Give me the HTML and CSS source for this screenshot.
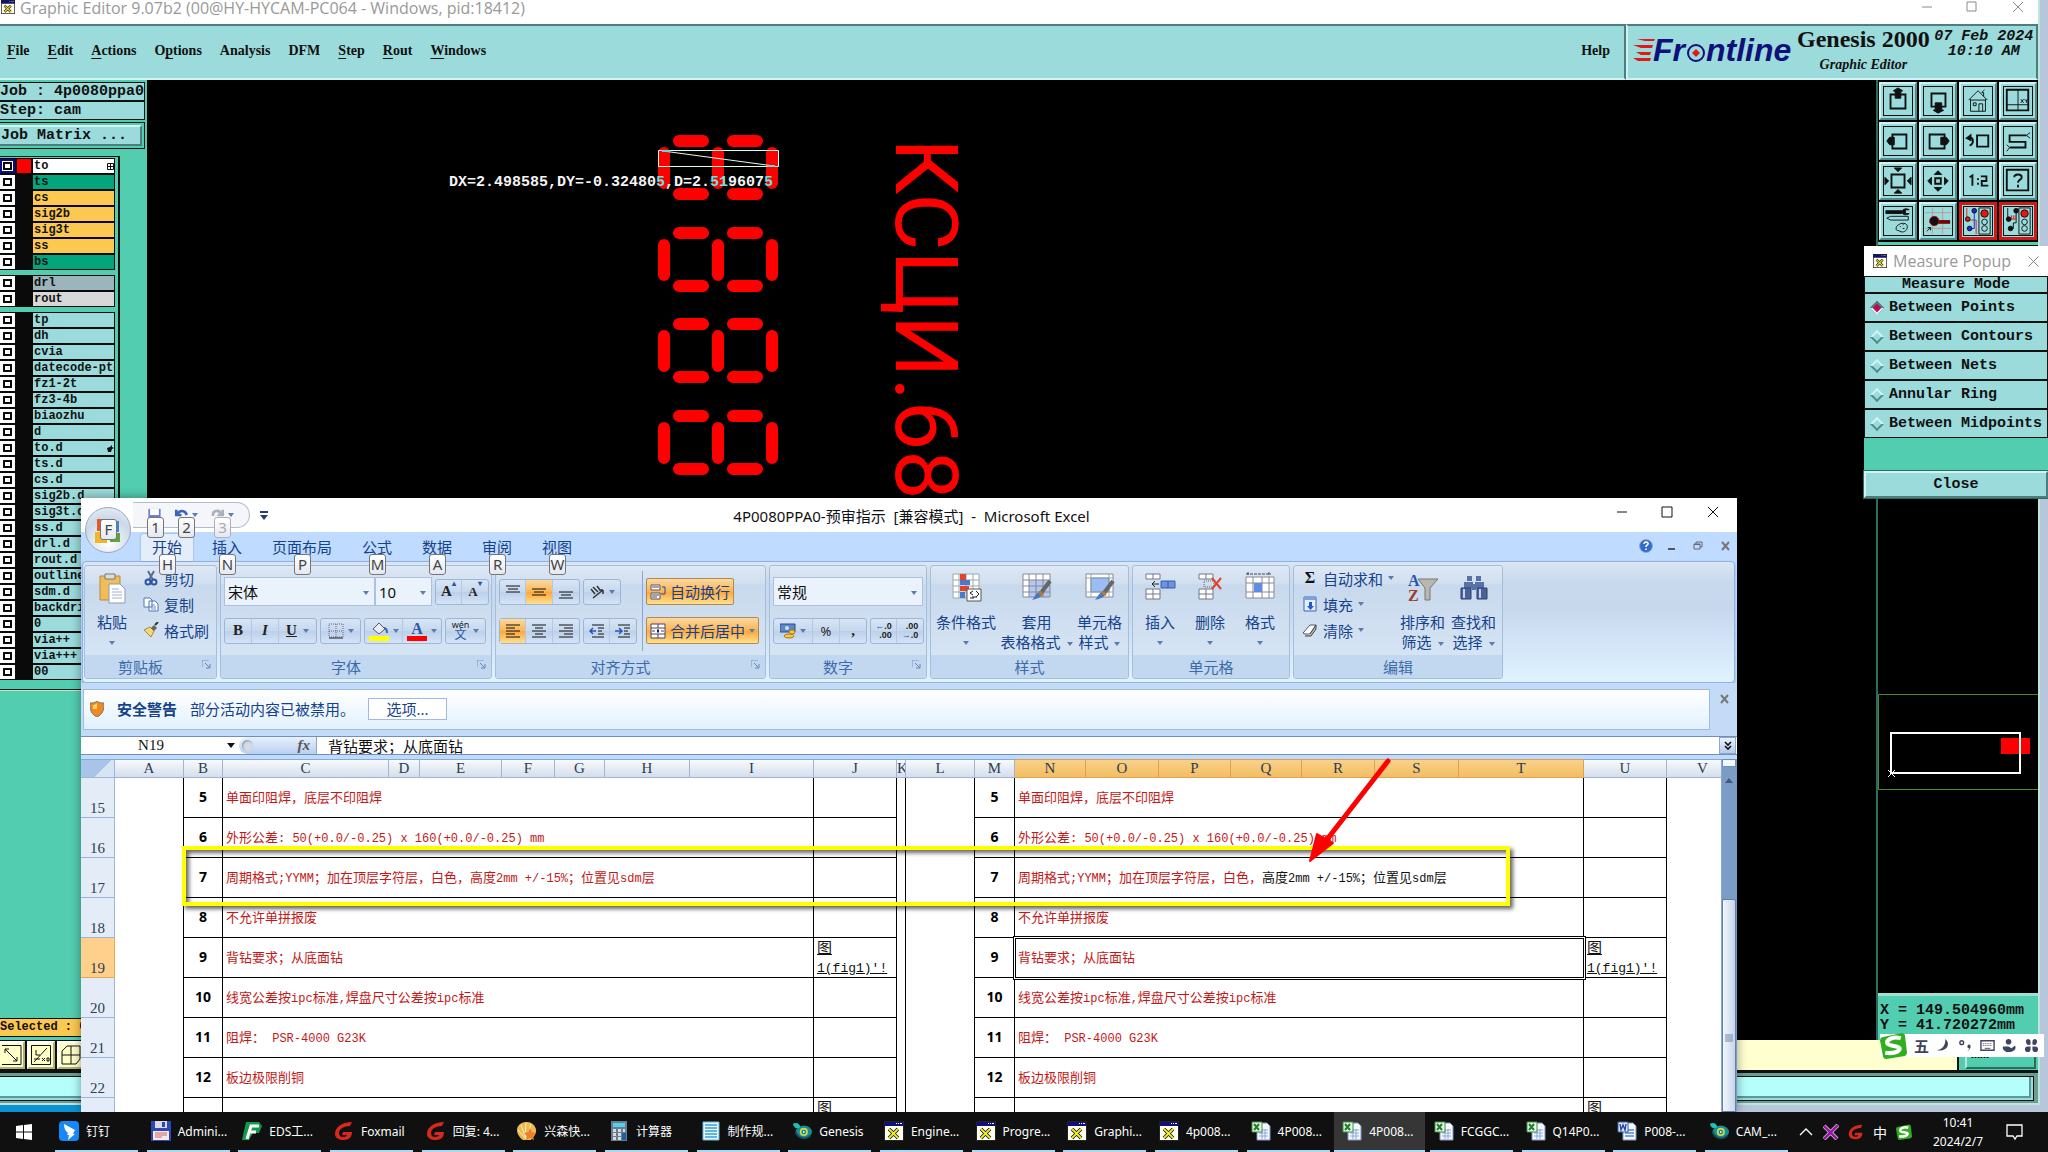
FILE: index.html
```html
<!DOCTYPE html>
<html lang="zh-CN">
<head>
    <meta charset="UTF-8">
    <meta name="viewport" content="width=device-width, initial-scale=1.0">
    <title>Graphic Editor</title>
    <link rel="stylesheet" href="styles.css">
</head>
<body>
    <!-- Shared icons -->
    <svg class="sprite" aria-hidden="true">
        <symbol id="i-x11" viewBox="0 0 20 20">
            <path d="M0 0h20v20H0z" fill="#222"/><path d="M1 5h18v14H1z" fill="#fffff0"/><path d="M1 1h18v4H1z" fill="#10107c"/>
            <path d="M12 2h1v1h-1zM14 2h1v1h-1zM16 2h2v1h-2z" fill="#fff"/>
            <path d="M5 8l9 9M14 8l-9 9" stroke="#111" stroke-width="3.4"/><path d="M5 8l9 9M14 8l-9 9" stroke="#f2ee20" stroke-width="1.8"/>
        </symbol>
        <symbol id="i-xls" viewBox="0 0 20 20">
            <path d="M6 2h10l3 3v14H6z" fill="#f4f8ff" stroke="#7d95c0"/><path d="M8 9h9M8 12h9M8 15h9M11 8v10M14 8v10" stroke="#8aa6d8"/>
            <path d="M1 1h10v10H1z" fill="#e9f5e4" stroke="#3c8c3c"/><path d="M3 3l5 6M8 3l-5 6" stroke="#1d8030" stroke-width="2"/>
        </symbol>
        <symbol id="i-doc" viewBox="0 0 20 20">
            <path d="M6 2h10l3 3v14H6z" fill="#f4f8ff" stroke="#7d95c0"/><path d="M8 9h9M8 12h9M8 15h9" stroke="#5b80cc" stroke-width="1.5"/>
            <path d="M1 1h10v10H1z" fill="#dfe9fb" stroke="#3a5cac"/><path d="M3 3l1 6 2-5 2 5 1-6" fill="none" stroke="#2348a0" stroke-width="1.4"/>
        </symbol>
        <symbol id="i-fox" viewBox="0 0 20 20">
            <path d="M18 1C8 1 1 6 1 13c0 4 4 6 9 6s8-3 8-8H9l-1 3h5c-1 2-3 2-4 2-3 0-4-2-4-4 0-4 5-7 11-7z" fill="#d8281c"/>
        </symbol>
        <symbol id="i-gen" viewBox="0 0 22 20">
            <ellipse cx="13" cy="11" rx="9" ry="7" fill="#168c8c"/><path d="M1 2c4-2 8 0 8 4-3 2-7 1-8-4z" fill="#20c0b8"/><path d="M4 11c3 8 12 9 16 4" fill="none" stroke="#184c60" stroke-width="2"/>
            <circle cx="13" cy="11" r="4.500" fill="#bcd85a"/><circle cx="13" cy="11" r="2.500" fill="#2a7a80"/><circle cx="13" cy="11" r="1" fill="#fff"/>
        </symbol>
        <symbol id="i-sogou" viewBox="0 0 26 26">
            <path d="M2 5L21 1q2 0 3 2l2 17q0 2-2 3L6 26q-2 0-3-2L0 8q0-2 2-3z" fill="#2fae1e"/>
            <path d="M20 6C13 4 6 7 7 11c1 3 12 2 12 5s-6 5-14 4" fill="none" stroke="#fff" stroke-width="4"/>
        </symbol>
        <symbol id="i-launch" viewBox="0 0 9 9"><path d="M0 7V0h7" fill="none" stroke="#6f94c4"/><path d="M3 3l4 4M8 4v4H4" fill="none" stroke="#5f84b8"/></symbol>
    </svg>

    <div class="desktop">
        <!-- Graphic editor window -->
        <section class="editor">
            <header class="editor-title">
                <svg class="win-icon"><use href="#i-x11"/></svg>
                <span>Graphic Editor 9.07b2 (00@HY-HYCAM-PC064 - Windows, pid:18412)</span>
                <svg class="win-controls" viewBox="0 0 102 12"><path d="M0 6h10M45 1h9v9h-9zM91 1l10 10M101 1L91 11" fill="none" stroke="#8a8a8a"/></svg>
            </header>
            <div class="menubar">
                <nav class="menus">
                    <a href="#"><u>F</u>ile</a>
                    <a href="#"><u>E</u>dit</a>
                    <a href="#"><u>A</u>ctions</a>
                    <a href="#">O<u>p</u>tions</a>
                    <a href="#">Analysis</a>
                    <a href="#">DFM</a>
                    <a href="#"><u>S</u>tep</a>
                    <a href="#"><u>R</u>out</a>
                    <a href="#"><u>W</u>indows</a>
                    <a href="#" class="help">Help</a>
                </nav>
                <div class="brand">
                    <svg class="frontline" viewBox="0 0 162 30">
                        <path d="M4 3h18l-1 2H12zM0 9h20l-1 3H8zM3 16h15l-1 3H8zM0 22h18l-1 3H5z" fill="#e01818"/>
                        <text x="20" y="25">Fr</text><text x="73" y="25">ntline</text>
                        <circle cx="63" cy="17" r="8" fill="none" stroke="#10107c" stroke-width="2"/>
                        <path d="M63 13l4 4-4 4-4-4z" fill="#e01818"/>
                    </svg>
                    <div class="product"><strong>Genesis 2000</strong><em>Graphic Editor</em></div>
                    <div class="stamp">07 Feb 2024<br>10:10 AM</div>
                </div>
            </div>

            <div class="editor-main">
                <aside class="layers-panel">
                    <div class="job-line">Job : 4p0080ppa0</div>
                    <div class="job-line">Step: cam</div>
                    <div class="matrix-wrap"><button class="matrix">Job Matrix ...</button></div>
                    <div class="layer-box">
                        <div class="layer-group">
                            <label class="layer current"><input type="checkbox"><i></i><span>to<svg class="mark" viewBox="0 0 7 7"><path d="M.5.500h6v6h-6zM3.500 0v7M0 3.500h7" fill="none" stroke="#111"/></svg></span></label>
                            <label class="layer mask"><input type="checkbox"><i></i><span>ts</span></label>
                            <label class="layer copper"><input type="checkbox"><i></i><span>cs</span></label>
                            <label class="layer copper"><input type="checkbox"><i></i><span>sig2b</span></label>
                            <label class="layer copper"><input type="checkbox"><i></i><span>sig3t</span></label>
                            <label class="layer copper"><input type="checkbox"><i></i><span>ss</span></label>
                            <label class="layer mask"><input type="checkbox"><i></i><span>bs</span></label>
                        </div>
                        <div class="layer-group">
                            <label class="layer drill"><input type="checkbox"><i></i><span>drl</span></label>
                            <label class="layer rout"><input type="checkbox"><i></i><span>rout</span></label>
                        </div>
                        <div class="layer-group">
                            <label class="layer"><input type="checkbox"><i></i><span>tp</span></label>
                            <label class="layer"><input type="checkbox"><i></i><span>dh</span></label>
                            <label class="layer"><input type="checkbox"><i></i><span>cvia</span></label>
                            <label class="layer"><input type="checkbox"><i></i><span>datecode-ptc</span></label>
                            <label class="layer"><input type="checkbox"><i></i><span>fz1-2t</span></label>
                            <label class="layer"><input type="checkbox"><i></i><span>fz3-4b</span></label>
                            <label class="layer"><input type="checkbox"><i></i><span>biaozhu</span></label>
                            <label class="layer"><input type="checkbox"><i></i><span>d</span></label>
                            <label class="layer"><input type="checkbox"><i></i><span>to.d<svg class="mark" viewBox="0 0 7 7"><path d="M0 3l3-1 2-2v2l2 1-2 1-1 3H1z" fill="#111"/></svg></span></label>
                            <label class="layer"><input type="checkbox"><i></i><span>ts.d</span></label>
                            <label class="layer"><input type="checkbox"><i></i><span>cs.d</span></label>
                            <label class="layer"><input type="checkbox"><i></i><span>sig2b.d</span></label>
                            <label class="layer"><input type="checkbox"><i></i><span>sig3t.d</span></label>
                            <label class="layer"><input type="checkbox"><i></i><span>ss.d</span></label>
                            <label class="layer"><input type="checkbox"><i></i><span>drl.d</span></label>
                            <label class="layer"><input type="checkbox"><i></i><span>rout.d</span></label>
                            <label class="layer"><input type="checkbox"><i></i><span>outline</span></label>
                            <label class="layer"><input type="checkbox"><i></i><span>sdm.d</span></label>
                            <label class="layer"><input type="checkbox"><i></i><span>backdri</span></label>
                            <label class="layer"><input type="checkbox"><i></i><span>0</span></label>
                            <label class="layer"><input type="checkbox"><i></i><span>via++</span></label>
                            <label class="layer"><input type="checkbox"><i></i><span>via+++</span></label>
                            <label class="layer"><input type="checkbox"><i></i><span>00</span></label>
                        </div>
                    </div>
                    <div class="panel-fill"></div>
                    <div class="selected">Selected : 0</div>
                </aside>

                <div class="canvas">
                    <svg class="artwork" viewBox="147 80 900 600" width="900" height="600">
                        <defs>
                            <g id="digit" stroke="#f00" stroke-width="12" stroke-linecap="round">
                                <path d="M679 141h24M733 141h24M679 194h24M733 194h24M664 153v30M718 153v30M772 153v30"/>
                            </g>
                        </defs>
                        <use href="#digit"/>
                        <use href="#digit" y="92"/>
                        <use href="#digit" y="183"/>
                        <use href="#digit" y="275"/>
                        <path d="M658.500 150.500h120v16h-120zM663 151l111 15" fill="none" stroke="#dfe"/>
                        <path d="M662 151h8M768 166h7" stroke="#4ce0e0" stroke-width="2"/>
                        <text class="readout" x="449" y="186">DX=2.498585,DY=-0.32480<tspan class="crossed">5</tspan>,D=2.<tspan class="crossed">51</tspan>9607<tspan class="crossed">5</tspan></text>
                        <text class="silk" transform="translate(896 138) rotate(90)">КСЦИ.68</text>
                    </svg>
                </div>

                <aside class="tools-panel">
                    <div class="tool-grid">
                        <button aria-label="Pan up"><svg viewBox="0 0 30 30"><path d="M7 8h16v15H7z" class="b"/><path d="M10 4l5-3 5 3-2 1v7h-6V5z" class="k"/></svg></button>
                        <button aria-label="Pan down"><svg viewBox="0 0 30 30"><path d="M8 7h15v14H8z" class="b"/><path d="M12 17h7v7l2 1-6 3-5-3 2-1z" class="k"/></svg></button>
                        <button aria-label="Home"><svg viewBox="0 0 30 30"><path d="M5 14L15 4l10 10M7 13v13h16V13M10 17h3v3h-3zM16 26v-8h4v8M21 10V6l-2 0 3-3M7 14h16"/></svg></button>
                        <button aria-label="Zoom window"><svg viewBox="0 0 30 30"><path d="M3 3h23v22H3z" class="b"/><path d="M15 3v22M3 19h23M18 13l3 4M21 13l-3 4M22 13l2 2 1-2M24 15v2"/></svg></button>
                        <button aria-label="Pan left"><svg viewBox="0 0 30 30"><path d="M9 8h15v15H9z" class="b"/><path d="M3 15l3-4h5v8H6z" class="k"/></svg></button>
                        <button aria-label="Pan right"><svg viewBox="0 0 30 30"><path d="M6 8h16v15H6z" class="b"/><path d="M27 15l-3-4h-6v8h6z" class="k"/></svg></button>
                        <button aria-label="Previous view"><svg viewBox="0 0 30 30"><path d="M14 9h12v12H14z" class="b"/><path d="M4 12c7-3 7 6 2 8M3 12l4-3v5z" class="b"/></svg></button>
                        <button aria-label="Serpentine"><svg viewBox="0 0 30 30"><path d="M24 9H6v7h17v6H6" class="b"/><path d="M24 9l4-3M24 9l4 3M6 22l-3-3M6 22l-3 4"/></svg></button>
                        <button aria-label="Zoom in"><svg viewBox="0 0 30 30"><path d="M8 8h14v14H8z" class="b"/><path d="M11 1h8l-4 4zM11 28h8l-4-4zM1 11v8l4-4zM29 11v8l-4-4z" class="k"/></svg></button>
                        <button aria-label="Zoom out"><svg viewBox="0 0 30 30"><path d="M12 12h6v6h-6z" class="b"/><path d="M11 8h8l-4-4zM11 22h8l-4 4zM8 11v8l-4-4zM22 11v8l4-4z" class="k"/></svg></button>
                        <button aria-label="Scale"><svg viewBox="0 0 30 30"><path d="M6 11l3-2v11M15 12v2M15 17v2M18 10h6v5h-5v5h7" class="b"/></svg></button>
                        <button aria-label="Help"><svg viewBox="0 0 30 30"><path d="M3 3h23v22H3z" class="b"/><path d="M11 11c0-4 8-4 8 0 0 3-4 2-4 6M15 19v3" class="b"/></svg></button>
                        <button aria-label="Attributes"><svg viewBox="0 0 30 30"><path d="M2 4h17v3H2z" class="k"/><path d="M27 3c-3-2-7-1-8 2 1 4 5 4 8 2h-4V3z" class="k"/><path d="M3 12l4-2h19v4H7zM13 24c-1-7 12-9 12-3 0 5-5 7-8 5s-3 0-4-2zM17 21h1M20 19h1M20 23h2"/></svg></button>
                        <button aria-label="Snap"><svg viewBox="0 0 30 30"><path d="M9 1v28M20 1v28M1 6h28M1 23h28" stroke="#b99"/><path d="M14 16h14" stroke="#700" stroke-width="4"/><circle cx="11" cy="15" r="5" fill="#111" stroke="#b01010"/><path d="M3 26l4-4M4 22h3v3"/></svg></button>
                        <button class="alert" aria-label="Nets"><svg viewBox="0 0 30 30"><path d="M16 1h12v28H16z"/><path d="M3 1v13h10v15" stroke="#d22"/><path d="M11 3v20H6" stroke="#22d"/><circle cx="11" cy="4" r="2.500" fill="#22d"/><circle cx="6" cy="23" r="2.500" fill="#22d"/><circle cx="4" cy="13" r="2.500" fill="#e11"/><circle cx="22" cy="7" r="4" fill="#e11"/><circle cx="22" cy="16" r="3"/><circle cx="22" cy="23" r="3"/></svg></button>
                        <button class="alert" aria-label="Checks"><svg viewBox="0 0 30 30"><path d="M16 1h12v28H16z"/><path d="M4 1v12M13 3v14h-3v6H7"/><path d="M6 13h7M8 13V9M10 13V9M12 13V9" stroke="#d22"/><circle cx="13" cy="4" r="2.500" class="k"/><circle cx="7" cy="23" r="2.500" class="k"/><circle cx="5" cy="13" r="2.500" class="k"/><circle cx="22" cy="7" r="4" fill="#e11"/><circle cx="22" cy="16" r="3"/><circle cx="22" cy="23" r="3"/></svg></button>
                    </div>
                    <div class="overview">
                        <svg viewBox="1878 693 160 300" width="160" height="300">
                            <path d="M1878.500 694.500h162v95h-162z" fill="none" stroke="#4c8c28"/>
                            <path d="M2001 738h29v16h-29z" fill="#f00"/>
                            <path d="M1891 733h129v40h-129z" fill="none" stroke="#fff" stroke-width="2"/>
                            <path d="M1888 770l7 7M1895 770l-7 7" stroke="#fff"/>
                        </svg>
                    </div>
                    <div class="coords">X = 149.504960mm<br>Y = 41.720272mm</div>
                </aside>
            </div>

            <div class="status-row">
                <div class="status-tools">
                    <button aria-label="Measure"><svg viewBox="0 0 20 20"><path d="M0 .500h19v19H0M3 4l12 12M3 8V4h4M15 12v4h-4"/></svg></button>
                    <button aria-label="Angle"><svg viewBox="0 0 20 20"><path d="M.5.500h19v19H.500zM3 17L16 3M5 5v5h4M3 14h6M11 13l3 3M14 13l-3 3M16 13h2v3h-2z"/></svg></button>
                    <button aria-label="Grid"><svg viewBox="0 0 20 20"><path d="M1 6l5-5h13v13l-4 5H1zM10 1v18M1 10h18"/></svg></button>
                </div>
                <div class="status-text"></div>
                <div class="units"><button>mm</button></div>
            </div>
            <div class="command"><div></div></div>
        </section>

        <!-- Measure popup -->
        <section class="popup">
            <header class="popup-title">
                <svg class="win-icon"><use href="#i-x11"/></svg>
                <span>Measure Popup</span>
                <svg class="popup-x" viewBox="0 0 11 11"><path d="M.5.500l10 10M10.500.500l-10 10" stroke="#888"/></svg>
            </header>
            <div class="popup-head">Measure Mode</div>
            <label class="mode"><input type="radio" name="mode" checked>Between Points</label>
            <label class="mode"><input type="radio" name="mode">Between Contours</label>
            <label class="mode"><input type="radio" name="mode">Between Nets</label>
            <label class="mode"><input type="radio" name="mode">Annular Ring</label>
            <label class="mode"><input type="radio" name="mode">Between Midpoints</label>
            <button class="popup-close">Close</button>
        </section>

        <!-- Excel window -->
        <section class="excel">
            <header class="excel-title">
                <button class="orb" aria-label="Office">
                    <svg viewBox="0 0 30 30"><path d="M4 3h11v6H9v6H4z" fill="#e2592a"/><path d="M17 5h9v11h-4v-5h-5z" fill="#3f87cf"/><path d="M2 16h5v5h7v6H2z" fill="#f4b52a"/><path d="M17 20h5v-3h5v9H17z" fill="#5aa83c"/></svg>
                    <kbd>F</kbd>
                </button>
                <div class="quick">
                    <button aria-label="保存"><svg viewBox="0 0 16 16"><path d="M1 1h14v14H1z" fill="#6f7fd0"/><path d="M3 1h10v7H3z" fill="#fff"/></svg><kbd>1</kbd></button>
                    <button aria-label="撤消"><svg viewBox="0 0 16 16"><path d="M2 2v6h6M3 7c3-5 9-5 11 1" fill="none" stroke="#3a64b8" stroke-width="3"/></svg><b class="caret"></b><kbd>2</kbd></button>
                    <button aria-label="恢复" class="off"><svg viewBox="0 0 16 16"><path d="M14 2v6H8M13 7C9 1 2 3 3 9" fill="none" stroke="#a8b0bc" stroke-width="3"/></svg><b class="caret"></b><kbd>3</kbd></button>
                </div>
                <svg class="more" viewBox="0 0 8 9"><path d="M0 0h8v2H0zM0 4h8L4 9z" fill="#244070"/></svg>
                <h1>4P0080PPA0-预审指示&nbsp; [兼容模式]&nbsp; - &nbsp;Microsoft Excel</h1>
                <svg class="excel-controls" viewBox="0 0 102 12"><path d="M0 6h10M45 1h10v10H45zM91 1l10 10M101 1L91 11" fill="none" stroke="#111"/></svg>
            </header>
            <nav class="tabs">
                <a href="#" class="active">开始<kbd>H</kbd></a>
                <a href="#">插入<kbd>N</kbd></a>
                <a href="#">页面布局<kbd>P</kbd></a>
                <a href="#">公式<kbd>M</kbd></a>
                <a href="#">数据<kbd>A</kbd></a>
                <a href="#">审阅<kbd>R</kbd></a>
                <a href="#">视图<kbd>W</kbd></a>
                <svg class="doc-controls" viewBox="0 0 92 14"><circle cx="7" cy="7" r="6.500" fill="#2f6bd0" stroke="#9ab"/><path d="M5 5c0-3 5-2 4 0 0 1-2 1-2 3M7 9.500v1.500" fill="none" stroke="#fff" stroke-width="1.600"/><path d="M29 10h7" stroke="#556" stroke-width="2"/><path d="M55 5h6v5h-6zM57 5V3h6v5h-2M55 5.500h6" fill="none" stroke="#667"/><path d="M83 3l7 8M90 3l-7 8" stroke="#777" stroke-width="2"/></svg>
            </nav>

            <div class="ribbon">
                <div class="group clipboard">
                    <div class="group-body">
                        <button class="big"><svg viewBox="0 0 32 32"><path d="M4 4h20v24H4z" fill="#f0bd58" stroke="#b98a3c"/><path d="M9 2h10v5H9z" fill="#ddd" stroke="#777"/><path d="M13 12h11l5 5v14H13z" fill="#fff" stroke="#8a9ab8"/><path d="M16 17h7M16 20h10M16 23h10M16 26h10" stroke="#9ab0d4"/></svg>粘贴<b class="caret"></b></button>
                        <div class="small-list">
                            <button><svg viewBox="0 0 16 16"><path d="M5 1l5 9M11 1l-5 9" stroke="#5a6c90" stroke-width="2"/><circle cx="5" cy="12" r="2.500" fill="none" stroke="#2c55a8" stroke-width="2"/><circle cx="11" cy="12" r="2.500" fill="none" stroke="#2c55a8" stroke-width="2"/></svg>剪切</button>
                            <button><svg viewBox="0 0 16 16"><path d="M1 2h6l2 2v7H1zM6 5h6l3 3v7H6z" fill="#fff" stroke="#4c74b8"/><path d="M8 9h4M8 11h5M8 13h5" stroke="#6a90cc"/></svg>复制</button>
                            <button><svg viewBox="0 0 16 16"><path d="M1 8l6-3 4 4-3 6z" fill="#f3d878" stroke="#a88838"/><path d="M8 6l3-3 3 3-3 3z" fill="#666"/><path d="M12 3l3-3" stroke="#334" stroke-width="2"/></svg>格式刷</button>
                        </div>
                    </div>
                    <div class="group-name launch">剪贴板<svg><use href="#i-launch"/></svg></div>
                </div>

                <div class="group font">
                    <div class="group-body rows">
                        <div class="row">
                            <div class="fields">
                                <div class="combo w-font"><select aria-label="字体"><option>宋体</option></select></div>
                                <div class="combo w-size"><select aria-label="字号"><option>10</option></select></div>
                            </div>
                            <div class="bar"><button class="serif s26">A<sup>▴</sup></button><button class="serif small s26">A<sup>▾</sup></button></div>
                        </div>
                        <div class="row">
                            <div class="bar"><button class="serif s27">B</button><button class="serif s27"><i>I</i></button><button class="serif s37"><u>U</u><b class="caret"></b></button></div>
                            <div class="bar"><button class="s39"><svg viewBox="0 0 16 16"><path d="M1 1h14v13H1zM8 1v13M1 8h14" fill="none" stroke="#668" stroke-dasharray="1 1"/><path d="M1 15h14" stroke="#223"/></svg><b class="caret"></b></button></div>
                            <div class="bar"><button class="s38"><svg class="wide" viewBox="0 0 20 20"><path d="M4 8l6-6 6 6-6 5z" fill="#e8eef8" stroke="#557"/><path d="M15 7c3 0 3 3 3 5" fill="none" stroke="#36a" stroke-width="2"/><path d="M0 15h20v5H0z" fill="#ff0"/></svg><b class="caret"></b></button><button class="s38"><span class="font-color">A</span><b class="caret"></b></button></div>
                            <div class="bar"><button class="s39"><span class="pinyin"><small>wén</small>文</span><b class="caret"></b></button></div>
                        </div>
                    </div>
                    <div class="group-name launch">字体<svg><use href="#i-launch"/></svg></div>
                </div>

                <div class="group align">
                    <div class="group-body">
                        <div class="align-left">
                            <div class="row">
                                <div class="bar">
                                    <button class="s26"><svg viewBox="0 0 16 16"><path d="M1 2h14M3 5h10M1 8h14" class="ln"/></svg></button>
                                    <button class="s27 on"><svg viewBox="0 0 16 16"><path d="M1 5h14M3 8h10M1 11h14" class="ln"/></svg></button>
                                    <button class="s26"><svg viewBox="0 0 16 16"><path d="M1 8h14M3 11h10M1 14h14" class="ln"/></svg></button>
                                </div>
                                <div class="bar"><button class="s36"><svg viewBox="0 0 16 16"><path d="M2 5l4 5M4 3l5 5M8 2l3 4M4 14L14 6M14 6v4M14 6h-4" fill="none" stroke="#333" stroke-width="1.500"/></svg><b class="caret"></b></button></div>
                            </div>
                            <div class="row">
                                <div class="bar">
                                    <button class="s26 on"><svg viewBox="0 0 16 16"><path d="M1 2h14M1 5h9M1 8h14M1 11h9M1 14h14" class="ln"/></svg></button>
                                    <button class="s27"><svg viewBox="0 0 16 16"><path d="M1 2h14M4 5h8M1 8h14M4 11h8M1 14h14" class="ln"/></svg></button>
                                    <button class="s26"><svg viewBox="0 0 16 16"><path d="M1 2h14M6 5h9M1 8h14M6 11h9M1 14h14" class="ln"/></svg></button>
                                </div>
                                <div class="bar">
                                    <button class="s26"><svg viewBox="0 0 16 16"><path d="M3 2h12M9 5h6M9 8h4M9 11h6M3 14h12" class="ln"/><path d="M1 8h6M4 5L1 8l3 3" fill="none" stroke="#2458b8" stroke-width="1.500"/></svg></button>
                                    <button class="s26"><svg viewBox="0 0 16 16"><path d="M3 2h12M9 5h6M9 8h4M9 11h6M3 14h12" class="ln"/><path d="M0 8h6M4 5l3 3-3 3" fill="none" stroke="#2458b8" stroke-width="1.500"/></svg></button>
                                </div>
                            </div>
                        </div>
                        <div class="align-right">
                            <button class="hot"><svg viewBox="0 0 16 16"><path d="M1 1h9v5H1zM1 9h9v6H1z" fill="#fff" stroke="#556"/><path d="M2 3h7M2 11h7M2 13h5" stroke="#446"/><path d="M12 3h3v7h-4" fill="none" stroke="#24a"/></svg>自动换行</button>
                            <button class="hot"><svg viewBox="0 0 16 16"><path d="M1 1h14v14H1zM1 5h14M1 11h14M8 1v4M8 11v4" fill="#fff" stroke="#446"/><path d="M2 8h3M14 8h-3" stroke="#24a"/><path d="M7 6.500h2v3H7z" fill="#224"/></svg>合并后居中<b class="caret"></b></button>
                        </div>
                    </div>
                    <div class="group-name launch">对齐方式<svg><use href="#i-launch"/></svg></div>
                </div>

                <div class="group number">
                    <div class="group-body rows">
                        <div class="row"><div class="combo w-num"><select aria-label="数字格式"><option>常规</option></select></div></div>
                        <div class="row">
                            <div class="bar"><button class="s39"><svg viewBox="0 0 16 16"><path d="M0 1h15v8H0z" fill="#5f87c8" stroke="#2c4c8c"/><circle cx="7" cy="5" r="2" fill="#cfe0f8"/><ellipse cx="12" cy="9" rx="3" ry="2" fill="#f8c840" stroke="#a87820"/><ellipse cx="9" cy="13" rx="5" ry="2" fill="#f8c840" stroke="#a87820"/></svg><b class="caret"></b></button><button class="s27 txt">%</button><button class="s26 serif">,</button></div>
                            <div class="bar"><button class="s26 dec"><span><i>←</i>.0<br>.00</span></button><button class="s26 dec"><span>.00<br><i>→</i>.0</span></button></div>
                        </div>
                    </div>
                    <div class="group-name launch">数字<svg><use href="#i-launch"/></svg></div>
                </div>

                <div class="group styles">
                    <div class="group-body">
                        <button class="big"><svg viewBox="0 0 32 32"><path d="M3 2h26v24H3zM3 8h26M3 14h26M3 20h26M9 2v24M16 2v24M23 2v24" fill="#fff" stroke="#9aa"/><path d="M10 2h6v6h-6zM10 14h9v5h-9z" fill="#e0452c"/><path d="M10 8h10v5H10zM10 20h5v6h-5z" fill="#4a78d0"/><path d="M17 17h14v12H17z" fill="#fff" stroke="#555"/><path d="M23 19l-3 2 3 2M20 26h4M26 19l3 3-3 3M22 25h5" fill="none" stroke="#222"/></svg>条件格式<b class="caret"></b></button>
                        <button class="big"><svg viewBox="0 0 32 32"><path d="M3 2h27v23H3z" fill="#fff"/><path d="M9 8h21v17H9z" fill="#b4c8f0"/><path d="M3 2h27v23H3zM3 8h27M3 14h27M3 20h27M9 2v23M16 2v23M23 2v23" fill="none" stroke="#889"/><path d="M30 9L21 21" stroke="#666" stroke-width="4"/><path d="M21 19c3 2 2 7-9 9 3-3 4-8 9-9z" fill="#4a78c0"/><path d="M19 20l4 3" stroke="#b87a38" stroke-width="3"/></svg>套用<span>表格格式<b class="caret"></b></span></button>
                        <button class="big"><svg viewBox="0 0 32 32"><path d="M3 2h27v23H3z" fill="#fff" stroke="#889"/><path d="M8 6h18v14H8z" fill="#9cbcf4" stroke="#5a80c8"/><path d="M3 6h27M3 20h27M8 2v23M26 2v23" stroke="#9aa"/><path d="M30 9L21 21" stroke="#666" stroke-width="4"/><path d="M21 19c3 2 2 7-9 9 3-3 4-8 9-9z" fill="#4a78c0"/><path d="M19 20l4 3" stroke="#b87a38" stroke-width="3"/></svg>单元格<span>样式<b class="caret"></b></span></button>
                    </div>
                    <div class="group-name">样式</div>
                </div>

                <div class="group cells">
                    <div class="group-body">
                        <button class="big"><svg viewBox="0 0 32 32"><path d="M2 2h14v5H2zM9 2v5M2 17h14v10H2zM9 17v10M2 22h14" fill="#fff" stroke="#778"/><path d="M17 9h14v7H17zM24 9v7" fill="#6a94e0" stroke="#3a5ca8"/><path d="M15 12H8M11 9l-3 3 3 3" fill="none" stroke="#222"/></svg>插入<b class="caret"></b></button>
                        <button class="big"><svg viewBox="0 0 32 32"><path d="M5 2h14v5H5zM12 2v5M5 17h14v10H5zM12 17v10M5 22h14" fill="#fff" stroke="#778"/><path d="M10 9h10v6H10z" fill="none" stroke="#667" stroke-dasharray="1 1"/><path d="M18 6l9 11M27 6l-9 11" stroke="#e2432c" stroke-width="2"/></svg>删除<b class="caret"></b></button>
                        <button class="big"><svg viewBox="0 0 32 32"><path d="M2 5h28v21H2zM2 11h28M2 20h28M9 5v21M18 5v21M25 5v21" fill="#fff" stroke="#889"/><path d="M10 11h8v9h-8z" fill="#5f8ce4"/><path d="M2 2h25M4 0v4M25 0v4" stroke="#445" stroke-dasharray="3 1"/></svg>格式<b class="caret"></b></button>
                    </div>
                    <div class="group-name">单元格</div>
                </div>

                <div class="group editing">
                    <div class="group-body">
                        <div class="small-list">
                            <button><span class="sigma">Σ</span>自动求和<b class="caret"></b></button>
                            <button><svg viewBox="0 0 16 16"><path d="M2 1h12v14H2z" fill="#e4eefc" stroke="#3a64b8"/><path d="M2 1h12v3H2z" fill="#7ca0e0"/><path d="M7 6h3v4h2l-3.500 4L5 10h2z" fill="#2458c8"/></svg>填充<b class="caret"></b></button>
                            <button><svg viewBox="0 0 16 16"><path d="M1 11l7-8h6l-6 9H3z" fill="#fff" stroke="#556"/><path d="M8 12l6-9v4l-5 7H3" fill="#bbb" stroke="#444"/></svg>清除<b class="caret"></b></button>
                        </div>
                        <button class="big"><svg viewBox="0 0 32 32"><text x="1" y="14" class="az a">A</text><text x="1" y="29" class="az z">Z</text><path d="M11 7h20l-8 9v12h-5V16z" fill="#b8b8b0" stroke="#777"/></svg>排序和<span>筛选<b class="caret"></b></span></button>
                        <button class="big"><svg viewBox="0 0 32 32"><path d="M9 4h5v5h-5zM18 4h5v5h-5zM6 10h9v6H6zM17 10h9v6h-9zM14 12h4v6h-4z" fill="#5872a8"/><path d="M3 16h10v11H3zM19 16h10v11H19z" fill="#4a6298" stroke="#2c4070"/><path d="M6 17v9M22 17v9" stroke="#c4d2ec" stroke-width="2"/></svg>查找和<span>选择<b class="caret"></b></span></button>
                    </div>
                    <div class="group-name">编辑</div>
                </div>
            </div>

            <div class="message-bar">
                <div class="message">
                    <svg viewBox="0 0 14 16"><path d="M7 0c2 2 5 2 7 2 0 7-1 11-7 14C1 13 0 9 0 2c2 0 5 0 7-2z" fill="#f08a1c" stroke="#777"/><path d="M3 4c2 0 3-1 4-2v6H3z" fill="#ffd070"/></svg>
                    <strong>安全警告</strong>
                    <span>部分活动内容已被禁用。</span>
                    <button>选项...</button>
                </div>
                <svg class="bar-x" viewBox="0 0 10 10"><path d="M1 1l7 8M8 1L1 9" stroke="#777" stroke-width="2"/></svg>
            </div>

            <div class="formula-bar">
                <div class="name-box"><input value="N19" aria-label="名称框"><b class="caret"></b></div>
                <div class="fx"><i></i><em>fx</em></div>
                <input class="formula" value="背钻要求；从底面钻" aria-label="编辑栏">
                <button class="expand" aria-label="展开"><svg viewBox="0 0 8 10"><path d="M1 1l3 3 3-3M1 5l3 3 3-3" fill="none" stroke="#111" stroke-width="1.600"/></svg></button>
            </div>

            <div class="sheet-area">
                <div class="sheet-clip">
                    <table class="sheet">
                        <colgroup>
                            <col class="c33"><col class="c69"><col class="c39"><col class="c166"><col class="c31"><col class="c82"><col class="c53"><col class="c50"><col class="c85"><col class="c124"><col class="c83"><col class="c9"><col class="c69"><col class="c40"><col class="c71"><col class="c73"><col class="c72"><col class="c71"><col class="c73"><col class="c84"><col class="c125"><col class="c83"><col>
                        </colgroup>
                        <thead>
                            <tr><th class="corner"></th><th>A</th><th>B</th><th>C</th><th>D</th><th>E</th><th>F</th><th>G</th><th>H</th><th>I</th><th>J</th><th>K</th><th>L</th><th>M</th><th class="sel">N</th><th class="sel">O</th><th class="sel">P</th><th class="sel">Q</th><th class="sel">R</th><th class="sel">S</th><th class="sel">T</th><th>U</th><th>V</th></tr>
                        </thead>
                        <tbody>
                            <tr><th>15</th><td class="edge"></td><td class="no">5</td><td class="req" colspan="7">单面印阻焊，底层不印阻焊</td><td class="fig"></td><td class="edge"></td><td class="edge"></td><td class="no">5</td><td class="req" colspan="7">单面印阻焊，底层不印阻焊</td><td class="fig"></td><td></td></tr>
                            <tr><th>16</th><td class="edge"></td><td class="no">6</td><td class="req" colspan="7">外形公差<code>: 50(+0.0/-0.25) x 160(+0.0/-0.25) mm</code></td><td class="fig"></td><td class="edge"></td><td class="edge"></td><td class="no">6</td><td class="req" colspan="7">外形公差<code>: 50(+0.0/-0.25) x 160(+0.0/-0.25) mm</code></td><td class="fig"></td><td></td></tr>
                            <tr><th>17</th><td class="edge"></td><td class="no">7</td><td class="req" colspan="7">周期格式<code>;YYMM</code>；加在顶层字符层，白色，高度<code>2mm +/-15%</code>；位置见<code>sdm</code>层</td><td class="fig"></td><td class="edge"></td><td class="edge"></td><td class="no">7</td><td class="req" colspan="7">周期格式<code>;YYMM</code>；加在顶层字符层，白色，<span class="plain-text">高度<code>2mm +/-15%</code>；位置见<code>sdm</code>层</span></td><td class="fig"></td><td></td></tr>
                            <tr><th>18</th><td class="edge"></td><td class="no">8</td><td class="req" colspan="7">不允许单拼报废</td><td class="fig"></td><td class="edge"></td><td class="edge"></td><td class="no">8</td><td class="req" colspan="7">不允许单拼报废</td><td class="fig"></td><td></td></tr>
                            <tr><th class="sel">19</th><td class="edge"></td><td class="no">9</td><td class="req" colspan="7">背钻要求；从底面钻</td><td class="fig"><a href="#">图<br><code>1(fig1)'!</code></a></td><td class="edge"></td><td class="edge"></td><td class="no">9</td><td class="req active-cell" colspan="7">背钻要求；从底面钻</td><td class="fig"><a href="#">图<br><code>1(fig1)'!</code></a></td><td></td></tr>
                            <tr><th>20</th><td class="edge"></td><td class="no">10</td><td class="req" colspan="7">线宽公差按<code>ipc</code>标准<code>,</code>焊盘尺寸公差按<code>ipc</code>标准</td><td class="fig"></td><td class="edge"></td><td class="edge"></td><td class="no">10</td><td class="req" colspan="7">线宽公差按<code>ipc</code>标准<code>,</code>焊盘尺寸公差按<code>ipc</code>标准</td><td class="fig"></td><td></td></tr>
                            <tr><th>21</th><td class="edge"></td><td class="no">11</td><td class="req" colspan="7">阻焊：<code> PSR-4000 G23K</code></td><td class="fig"></td><td class="edge"></td><td class="edge"></td><td class="no">11</td><td class="req" colspan="7">阻焊：<code> PSR-4000 G23K</code></td><td class="fig"></td><td></td></tr>
                            <tr><th>22</th><td class="edge"></td><td class="no">12</td><td class="req" colspan="7">板边极限削铜</td><td class="fig"></td><td class="edge"></td><td class="edge"></td><td class="no">12</td><td class="req" colspan="7">板边极限削铜</td><td class="fig"></td><td></td></tr>
                            <tr><th></th><td class="edge"></td><td class="no"></td><td class="req" colspan="7"></td><td class="fig"><a href="#">图</a></td><td class="edge"></td><td class="edge"></td><td class="no"></td><td class="req" colspan="7"></td><td class="fig"><a href="#">图</a></td><td></td></tr>
                        </tbody>
                    </table>
                </div>
                <div class="scrollbar">
                    <div class="split-box"></div>
                    <div class="track"><svg viewBox="0 0 8 5"><path d="M0 5l4-5 4 5z" fill="#44597c"/></svg></div>
                    <div class="thumb"><svg viewBox="0 0 8 9"><path d="M0 1h8M0 3h8M0 5h8M0 7h8" stroke="#6d87ac"/></svg></div>
                </div>
            </div>
        </section>

        <!-- Markup over the sheet -->
        <div class="highlight"></div>
        <svg class="arrow" viewBox="0 0 84 106"><path d="M81 3L18 84" stroke="#f00" stroke-width="5" stroke-linecap="round"/><path d="M3 103l7-27 16 9z" fill="#f00" stroke="#f00" stroke-width="2" stroke-linejoin="round"/></svg>

        <!-- Input method bar -->
        <div class="ime">
            <svg class="ime-logo"><use href="#i-sogou"/></svg>
            <span>五</span>
            <svg viewBox="0 0 16 16"><path d="M10 1c6 5 2 14-9 12 6-1 9-5 9-12z" fill="#3f4560"/></svg>
            <svg viewBox="0 0 16 16"><circle cx="4" cy="5" r="2" fill="none" stroke="#3f4560" stroke-width="1.500"/><path d="M12 7a2 2 0 1 0 0 4c0 1-1 2-2 3 3-1 5-6 2-7z" fill="#3f4560"/></svg>
            <svg viewBox="0 0 16 16"><path d="M1 3h14v10H1z" fill="none" stroke="#3f4560" stroke-width="1.500"/><path d="M3 6h10M3 8h10" stroke="#3f4560" stroke-dasharray="1 1"/><path d="M5 11h6" stroke="#3f4560"/></svg>
            <svg viewBox="0 0 16 16"><circle cx="7" cy="4" r="3" fill="#3f4560"/><path d="M1 9h6l3 2 4-3c2 5-3 7-7 7s-7-3-6-6z" fill="#3f4560"/></svg>
            <svg viewBox="0 0 16 16"><path d="M4 1a3 3 0 1 0 3 6V4a3 3 0 0 0-3-3zM12 1a3 3 0 0 0-3 3v3a3 3 0 1 0 3-6zM4 9a3 3 0 1 0 3 3V9zM9 9v3a3 3 0 1 0 3-3z" fill="#3f4560"/></svg>
        </div>
    </div>

    <footer class="taskbar">
        <button class="start" aria-label="Start"><svg viewBox="0 0 16 16"><path d="M0 2l7-1v6.500H0zM8 1l8-1v7.500H8zM0 8.500h7V15l-7-1zM8 8.500h8V16l-8-1z" fill="#fff"/></svg></button>
        <div class="tasks">
            <button class="task"><svg viewBox="0 0 20 20"><rect width="20" height="20" rx="4" fill="#1688f8"/><path d="M5 3l11 6-2 4h2l-7 6 1-5H8l1-2c-3-2-4-6-4-9z" fill="#fff"/></svg>钉钉</button>
            <button class="task"><svg viewBox="0 0 20 20"><path d="M0 0h20v20H0z" fill="#2c48b4"/><path d="M4 0h12v7H4z" fill="#d8dce8"/><path d="M11 1h3v5h-3z" fill="#2c48b4"/><path d="M2 10h16v9H2z" fill="#f8e8e8"/><path d="M4 12h12M4 14h12M4 16h7" stroke="#c66"/></svg>Admini...</button>
            <button class="task"><svg viewBox="0 0 20 20"><path d="M4 1h13l3 4-3 7h-6L7 19H0z" fill="#129a48"/><path d="M5 18L9 5h8M7 11h7" fill="none" stroke="#fff" stroke-width="3"/></svg>EDS工...</button>
            <button class="task"><svg><use href="#i-fox"/></svg>Foxmail</button>
            <button class="task"><svg><use href="#i-fox"/></svg>回复: 4...</button>
            <button class="task"><svg viewBox="0 0 20 20"><path d="M9 1c6-1 11 5 10 10-1 4-3 5-5 8H6C3 17 0 13 0 9s4-8 9-8z" fill="#f0b850"/><path d="M9 2L8 17M4 4l5 13M14 3l-4 14M1 9l8 9" stroke="#fff0c0"/><path d="M13 7l2 4 4 1-3 3 1 4-4-2-4 2 1-4-3-3 4-1z" fill="#f08028"/></svg>兴森快...</button>
            <button class="task"><svg viewBox="0 0 20 20"><path d="M2 0h16v20H2z" fill="#6c7c8c"/><path d="M4 2h12v4H4z" fill="#50d0f0"/><path d="M4 8h3v3H4zM9 8h3v3H9zM4 12h3v3H4zM9 12h3v3H9zM4 16h3v3H4zM9 16h3v3H9zM14 8h2v3h-2z" fill="#d4dce4"/><path d="M13 12h4v7h-4z" fill="#1c60a8"/></svg>计算器</button>
            <button class="task"><svg viewBox="0 0 20 20"><path d="M2 1h16v18H2z" fill="#e4f6ff" stroke="#68b8dc"/><path d="M4 4h12M4 7h12M4 10h12M4 13h12M4 16h12" stroke="#38a0d4" stroke-width="1.500"/></svg>制作规...</button>
            <button class="task"><svg><use href="#i-gen"/></svg>Genesis</button>
            <button class="task"><svg><use href="#i-x11"/></svg>Engine...</button>
            <button class="task"><svg><use href="#i-x11"/></svg>Progre...</button>
            <button class="task"><svg><use href="#i-x11"/></svg>Graphi...</button>
            <button class="task"><svg><use href="#i-x11"/></svg>4p008...</button>
            <button class="task"><svg><use href="#i-xls"/></svg>4P008...</button>
            <button class="task current"><svg><use href="#i-xls"/></svg>4P008...</button>
            <button class="task"><svg><use href="#i-xls"/></svg>FCGGC...</button>
            <button class="task"><svg><use href="#i-xls"/></svg>Q14P0...</button>
            <button class="task"><svg><use href="#i-doc"/></svg>P008-...</button>
            <button class="task"><svg><use href="#i-gen"/></svg>CAM_...</button>
        </div>
        <div class="tray">
            <svg viewBox="0 0 16 16"><path d="M2 11l6-6 6 6" fill="none" stroke="#fff" stroke-width="1.400"/></svg>
            <svg viewBox="0 0 16 16"><path d="M1 2l13 13M15 1L1 15" stroke="#e8c8f0" stroke-width="4"/><path d="M1 2l13 13M15 1L1 15" stroke="#901c9c" stroke-width="2.500"/></svg>
            <svg><use href="#i-fox"/></svg>
            <span class="lang">中</span>
            <svg><use href="#i-sogou"/></svg>
        </div>
        <div class="clock">10:41<br>2024/2/7</div>
        <svg class="notice" viewBox="0 0 18 18"><path d="M1 2h15v11h-5l-2 3-2-3H1z" fill="none" stroke="#fff" stroke-width="1.300"/></svg>
    </footer>
</body>
</html>
```
FILE: styles.css
```css
/* Global */
* {
    box-sizing: border-box;
}

body {
    margin: 0;
    height: 100vh;
    display: flex;
    flex-direction: column;
    overflow: hidden;
    font-family: "Noto Sans", "Noto Sans CJK SC", sans-serif;
    font-size: 15px;
}

button, input, select {
    font: inherit;
    color: inherit;
    margin: 0;
    padding: 0;
    border: 0;
    background: none;
}

a {
    color: inherit;
    text-decoration: none;
}

.sprite {
    position: absolute;
    width: 0;
    height: 0;
}

.desktop {
    position: relative;
    flex: 1;
    min-height: 0;
    overflow: hidden;
    background: linear-gradient(90deg, #0a92d4 0, #0a92d4 10%, #b8c6dc 60%, #b8c6dc 100%);
}

/* Graphic editor */
.editor {
    position: absolute;
    inset: 0 8px 7px 0;
    display: flex;
    flex-direction: column;
    background: #53cdb0;
    border-right: 2px solid #b8e8dc;
}

.editor-title {
    height: 24px;
    display: flex;
    align-items: flex-start;
    gap: 4px;
    background: #fff;
    color: #999;
    font: 16px/16px "Open Sans", sans-serif;
}

.win-icon {
    width: 16px;
    height: 14px;
}

.win-controls {
    width: 102px;
    height: 12px;
    margin: 1px 14px 0 auto;
}

.menubar {
    height: 56px;
    display: flex;
    background: #9bdbdb;
    color: #111;
    font-family: "Liberation Serif", serif;
}

.menus, .brand {
    border: 2px solid;
    border-color: #4f7c7c #4f7c7c #d0f4f4 #d0f4f4;
}

.menus {
    flex: 1;
    display: flex;
    align-items: center;
    gap: 18px;
    padding: 0 14px 2px 7px;
    border-left: 0;
    font-size: 14px;
    font-weight: bold;
}

.menus u {
    text-underline-offset: 3px;
}

.help {
    margin-left: auto;
}

.brand {
    width: 412px;
    display: flex;
    gap: 2px;
    padding: 1px 0 0 5px;
}

.frontline {
    width: 162px;
    height: 30px;
    margin-top: 9px;
}

.frontline text {
    font: italic bold 32px "Liberation Sans", sans-serif;
    fill: #10107c;
}

.product {
    display: flex;
    flex-direction: column;
    align-items: center;
    line-height: 25px;
}

.product strong {
    font-size: 24px;
}

.product em {
    font-size: 14px;
    font-weight: bold;
}

.stamp {
    flex: 1;
    padding-top: 2px;
    text-align: center;
    font: italic bold 15px/15px "Liberation Mono", monospace;
}

.editor-main {
    flex: 1;
    min-height: 0;
    display: flex;
}

/* Layer list */
.layers-panel {
    width: 147px;
    display: flex;
    flex-direction: column;
    padding-top: 2px;
    font: bold 12px/14px "Liberation Mono", monospace;
    color: #111;
    overflow: hidden;
}

.job-line {
    height: 19px;
    margin-right: 2px;
    border: 1px solid #111;
    border-left: 0;
    background: #9bdbdb;
    font-size: 15px;
    line-height: 18px;
    white-space: nowrap;
}

.matrix-wrap {
    height: 27px;
    margin: 2px 2px 0 0;
    padding: 2px 2px 2px 0;
    border: 1px solid #111;
    border-left: 0;
}

.matrix {
    width: 100%;
    height: 21px;
    padding-left: 1px;
    border: 2px solid;
    border-color: #d0f4f4 #4f7c7c #4f7c7c #9bdbdb;
    border-left: 0;
    background: #9bdbdb;
    font-size: 15px;
    line-height: 17px;
    text-align: left;
}

.layer-box {
    width: 120px;
    margin-top: 7px;
    padding: 1px 3px 0 0;
    border: 1px solid #111;
    border-width: 1px 2px 0 0;
    display: flex;
    flex-direction: column;
    gap: 5px;
}

.layer-group {
    background: #0a0a0a;
}

.layer {
    height: 16px;
    display: flex;
    align-items: center;
    padding-right: 1px;
}

.layer input {
    flex: none;
    appearance: none;
    width: 15px;
    height: 14px;
    background: #fff;
    border: 2px solid #fff;
    outline: 2px solid #0a0a0a;
    outline-offset: -5px;
}

.layer i {
    flex: none;
    width: 14px;
    height: 14px;
    margin: 0 2px;
}

.layer span {
    flex: 1;
    min-width: 0;
    display: flex;
    align-items: center;
    justify-content: space-between;
    height: 14px;
    padding-left: 1px;
    overflow: hidden;
    white-space: nowrap;
    background: #9bdbdb;
}

.mark {
    width: 7px;
    height: 7px;
}

.current i {
    background: #f00;
}

.current input {
    border-color: #0a0a90;
}

.layer.current span {
    background: #fff;
}

.mask span {
    background: #04a57c;
}

.copper span {
    background: #fcc850;
}

.drill span {
    background: #9cb4bc;
}

.rout span {
    background: #d8d8d8;
}

.panel-fill {
    flex: 1;
    margin: 9px 0 3px;
    border-top: 1px solid #111;
    box-shadow: inset 0 1px #b8e8dc;
}

.selected {
    height: 19px;
    margin-bottom: 3px;
    border: 1px solid #111;
    border-left: 0;
    background: #fcc850;
    line-height: 17px;
}

/* Drawing area */
.canvas {
    flex: 1;
    min-width: 0;
    overflow: hidden;
    background: #000;
}

.readout {
    font: bold 15px "Liberation Mono", monospace;
    fill: #f4f4f4;
}

.crossed {
    fill: #6ce0e0;
}

.silk {
    font: 88px Roboto, sans-serif;
    fill: #f00;
}

/* Tool panel */
.tools-panel {
    width: 162px;
    display: flex;
    flex-direction: column;
    border-left: 2px solid #2c6c5c;
    background: #000;
}

.tool-grid {
    display: grid;
    grid-template-columns: repeat(4, 38px);
    gap: 2px;
    padding: 2px 1px;
    border-bottom: 3px solid #53cdb0;
}

.tool-grid button {
    height: 38px;
    padding: 2px;
    border: 2px solid;
    border-color: #d0f4f4 #4f8c8c #4f8c8c #d0f4f4;
    background: #9bdbdb;
}

.tool-grid svg {
    display: block;
    width: 30px;
    height: 30px;
    border: 1px solid #111;
    fill: none;
    stroke: #111;
}

.tool-grid .b {
    stroke-width: 2;
}

.tool-grid .k {
    fill: #111;
}

.tool-grid .alert {
    padding: 1px;
    border: 3px solid #d01818;
}

.overview {
    flex: 1;
    min-height: 0;
    display: flex;
    align-items: flex-end;
}

.overview svg {
    display: block;
}

.coords {
    height: 47px;
    padding: 7px 2px;
    border-top: 3px solid #a0e0d0;
    background: #53cdb0;
    color: #111;
    font: bold 15px/15px "Liberation Mono", monospace;
}

/* Bottom rows of the editor */
.status-row {
    height: 32px;
    display: flex;
    background: #111;
    border-bottom: 2px solid #111;
}

.status-tools {
    display: flex;
    gap: 2px;
    padding: 1px 3px 1px 0;
}

.status-tools button {
    width: 28px;
    border: 2px solid;
    border-color: #fff #b0b078 #b0b078 #fff;
    background: #ffffc8;
}

.status-tools button:first-child {
    width: 25px;
    border-left: 0;
}

.status-tools svg {
    display: block;
    width: 20px;
    height: 20px;
    margin: 0 auto;
    fill: none;
    stroke: #111;
}

.status-text {
    flex: 1;
    background: #ffffd0;
}

.units {
    width: 79px;
    margin-left: 2px;
    padding: 1px 2px 1px 6px;
    background: #53cdb0;
}

.units button {
    width: 100%;
    height: 100%;
    padding-left: 4px;
    border: 2px solid;
    border-color: #b8e8dc #2c6c5c #2c6c5c #b8e8dc;
    text-align: left;
    font: bold 15px/20px "Liberation Mono", monospace;
}

.command {
    height: 33px;
    padding: 3px 4px 2px 0;
    border-top: 1px solid #111;
    border-bottom: 2px solid #b8e8dc;
    background: #6c9c94;
}

.command div {
    height: 100%;
    border: 1px solid #111;
    border-left: 0;
    background: #b4fffc;
    box-shadow: inset -2px -2px #9bdbdb, inset -4px -4px #5c9898;
}

/* Measure popup */
.popup {
    position: absolute;
    top: 246px;
    right: 0;
    width: 184px;
    display: flex;
    flex-direction: column;
    background: #53cdb0;
    color: #111;
    font: bold 15px/16px "Liberation Mono", monospace;
}

.popup-title {
    height: 30px;
    display: flex;
    align-items: center;
    gap: 5px;
    padding: 0 9px 0 8px;
    background: #fff;
    color: #999;
    font: 16px/20px "Open Sans", sans-serif;
}

.popup-x {
    width: 11px;
    height: 11px;
    margin-left: auto;
}

.popup-head {
    height: 17px;
    border: 1px solid #111;
    background: #9bdbdb;
    text-align: center;
}

.mode {
    height: 29px;
    display: flex;
    align-items: center;
    gap: 6px;
    padding-left: 6px;
    border: 1px solid #111;
    background: #9bdbdb;
    white-space: nowrap;
}

.mode input {
    appearance: none;
    width: 10px;
    height: 10px;
    margin: 0 1px;
    transform: rotate(45deg);
    border: 2px solid;
    border-color: #d0f4f4 #4f8c8c #4f8c8c #d0f4f4;
}

.mode input:checked {
    background: #c00850;
    border-color: #4f7c7c #d0f4f4 #d0f4f4 #4f7c7c;
}

.popup-close {
    height: 27px;
    margin-top: 33px;
    border: 2px solid;
    border-color: #d0f4f4 #4f7c7c #4f7c7c #d0f4f4;
    outline: 1px solid #2c6c5c;
    background: #9bdbdb;
}

/* Excel window */
.excel {
    position: absolute;
    inset: 498px 311px 0 81px;
    display: flex;
    flex-direction: column;
    background: #bfdbff;
    color: #15428b;
    box-shadow: 0 0 10px rgba(0, 0, 0, 0.4);
}

.caret {
    display: inline-block;
    border: 3px solid transparent;
    border-top: 4px solid #5c7cac;
    border-bottom: 0;
}

kbd {
    position: absolute;
    width: 17px;
    height: 21px;
    border: 1px solid #767676;
    border-radius: 3px;
    background: linear-gradient(#fff, #e4e8f0);
    color: #444;
    font: 15px/19px "Noto Sans", sans-serif;
    text-align: center;
    z-index: 2;
}

.excel-title {
    position: relative;
    height: 34px;
    display: flex;
    align-items: center;
    background: #fff;
    color: #111;
}

.orb {
    position: absolute;
    left: 4px;
    top: 9px;
    width: 46px;
    height: 46px;
    border: 1px solid #9aa8bc;
    border-radius: 50%;
    background: radial-gradient(circle at 50% 80%, #fff, #ccd8e8 60%, #eef4fc);
    z-index: 2;
}

.orb svg {
    width: 30px;
    height: 30px;
    margin-top: 6px;
}

.orb kbd {
    left: 14px;
    top: 11px;
}

.quick {
    height: 26px;
    width: 117px;
    margin-left: 52px;
    padding-left: 14px;
    display: flex;
    align-items: flex-start;
    gap: 12px;
    border: 1px solid #b4bccc;
    border-left: 0;
    border-radius: 0 13px 13px 0;
    background: #f4f6fa;
}

.quick button {
    position: relative;
    display: flex;
    align-items: center;
    gap: 3px;
    margin-top: 5px;
}

.quick svg {
    width: 15px;
    height: 14px;
}

.quick kbd {
    left: 0;
    top: 9px;
}

.quick .caret + kbd {
    left: 4px;
}

.quick .off kbd {
    color: #aaa;
    border-color: #b0b0b0;
}

.more {
    width: 8px;
    height: 9px;
    margin-left: 10px;
}

.excel-title h1 {
    flex: 1;
    margin: 0;
    padding-right: 62px;
    text-align: center;
    font-size: 15px;
    font-weight: normal;
}

.excel-controls {
    width: 102px;
    height: 12px;
    margin: 0 18px 6px 0;
}

.tabs {
    height: 29px;
    display: flex;
    align-items: flex-end;
    gap: 8px;
    padding: 0 6px 0 60px;
}

.tabs a {
    position: relative;
    height: 27px;
    padding: 0 11px;
    line-height: 26px;
    border-radius: 3px 3px 0 0;
}

.tabs .active {
    background: #e4eefb;
    box-shadow: 0 0 2px #6f94c4;
}

.tabs kbd {
    left: 50%;
    top: 20px;
    margin-left: -8px;
}

.doc-controls {
    width: 92px;
    height: 14px;
    margin: 0 0 8px auto;
}

.ribbon {
    height: 122px;
    margin: 0 2px 0 1px;
    display: flex;
    gap: 3px;
    padding: 3px 1px;
    border: 1px solid #8db2e3;
    border-radius: 4px;
    background: linear-gradient(#dbe6f4, #c9d9ed 16%, #c7d8ee 40%, #e0f3ff);
    box-shadow: 0 1px 2px #7a9cc8;
}

.group {
    display: flex;
    flex-direction: column;
    border: 1px solid #a4bfdc;
    border-radius: 3px;
    background: linear-gradient(#dee8f5, #d0dff0 16%, #c8d9ed 17%, #dae8f6);
    overflow: hidden;
}

.clipboard { width: 133px; }
.font { width: 272px; }
.align { width: 271px; }
.number { width: 158px; }
.styles { width: 199px; }
.cells { width: 158px; }
.editing { width: 210px; }

.group-body {
    flex: 1;
    min-height: 0;
    display: flex;
}

.group-name {
    position: relative;
    height: 23px;
    background: #c1d8f0;
    color: #3e6aaa;
    text-align: center;
    line-height: 24px;
}

.group-name.launch {
    padding-right: 20px;
}

.group-name svg {
    position: absolute;
    right: 5px;
    top: 5px;
    width: 9px;
    height: 9px;
}

.rows, .align-left, .align-right {
    display: flex;
    flex-direction: column;
    gap: 12px;
    padding: 12px 3px 0;
}

.row {
    height: 27px;
    display: flex;
    align-items: center;
    gap: 3px;
}

.fields {
    display: flex;
}

.combo {
    position: relative;
    height: 29px;
    border: 1px solid #abc1de;
    background: #eaf2fb;
    color: #111;
}

.combo::after {
    content: "";
    position: absolute;
    right: 5px;
    top: 13px;
    border: 3px solid transparent;
    border-top: 4px solid #5c7cac;
    border-bottom: 0;
}

.combo select {
    appearance: none;
    width: 100%;
    height: 27px;
    padding-left: 3px;
}

.w-font { width: 151px; }
.w-size { width: 57px; }
.w-num { width: 150px; }

.bar {
    display: flex;
    height: 26px;
    border: 1px solid #9db6d8;
    border-radius: 3px;
    background: linear-gradient(#d8e5f5, #c6d8ee 50%, #bcd0ea 51%, #d4e4f6);
}

.bar button {
    display: flex;
    align-items: center;
    justify-content: center;
    gap: 4px;
    border-right: 1px solid #b4c8e2;
    color: #222;
}

.bar button:last-child {
    border-right: 0;
}

.bar svg {
    width: 16px;
    height: 16px;
}

.bar svg.wide {
    width: 20px;
    height: 20px;
}

.s26 { width: 26px; }
.s27 { width: 27px; }
.s36 { width: 36px; }
.s37 { width: 37px; }
.s38 { width: 38px; }
.s39 { width: 39px; }

.bar .serif {
    font: bold 15px "Liberation Serif", serif;
    gap: 6px;
}

.bar .small {
    font-size: 13px;
}

.bar .serif.s26 {
    gap: 0;
}

.bar sup {
    color: #2c55a8;
    font-size: 8px;
    line-height: 8px;
    align-self: flex-start;
}

.bar .txt {
    font-size: 13px;
}

.bar .dec {
    font: bold 9px/9px "Liberation Sans", sans-serif;
    text-align: right;
}

.dec i {
    color: #2458b8;
    font-style: normal;
}

.font-color {
    width: 20px;
    height: 20px;
    border-bottom: 5px solid #f00;
    color: #2c55a8;
    font: bold 16px/15px "Liberation Serif", serif;
}

.pinyin {
    display: flex;
    flex-direction: column;
    align-items: center;
    color: #2c55a8;
    font-size: 12px;
    line-height: 12px;
}

.pinyin small {
    color: #222;
    font-size: 9px;
    line-height: 9px;
}

.ln {
    stroke: #111;
    stroke-width: 1;
    fill: none;
}

.bar .on, .hot {
    background: linear-gradient(#fbd9a0, #fbb454 50%, #fda63c 51%, #fee08c);
}

.align-left {
    padding-right: 5px;
    margin-bottom: 4px;
}

.align-right {
    align-items: flex-start;
    margin: 5px 0 4px;
    padding-top: 7px;
    border-left: 1px solid #88a8d4;
}

.hot {
    height: 27px;
    display: flex;
    align-items: center;
    gap: 4px;
    padding: 0 3px;
    border: 1px solid #b08a50;
    border-radius: 2px;
    white-space: nowrap;
}

.hot svg {
    width: 16px;
    height: 16px;
}

.small-list {
    display: flex;
    flex-direction: column;
}

.small-list button {
    height: 26px;
    display: flex;
    align-items: center;
    gap: 5px;
    padding-bottom: 2px;
    white-space: nowrap;
}

.small-list svg, .sigma {
    width: 16px;
    height: 16px;
}

.sigma {
    color: #111;
    font: bold 16px/16px "Liberation Serif", serif;
}

.big {
    display: flex;
    flex-direction: column;
    align-items: center;
    padding-top: 6px;
    line-height: 20px;
    white-space: nowrap;
}

.big svg {
    width: 32px;
    height: 32px;
    margin-bottom: 8px;
}

.big .caret {
    margin-top: 9px;
}

.big span .caret {
    margin: 0 0 2px 6px;
}

.clipboard .group-body {
    gap: 15px;
    padding-left: 11px;
}

.styles .group-body, .cells .group-body {
    justify-content: space-between;
    padding: 0 6px 0 5px;
}

.cells .group-body {
    padding: 0 13px 0 11px;
}

.editing .group-body {
    gap: 6px;
    justify-content: space-between;
    padding: 0 6px 0 8px;
}

.az {
    font: bold 16px "Liberation Serif", serif;
}

.a { fill: #2c55a8; }
.z { fill: #a03c2c; }

/* Security message */
.message-bar {
    height: 53px;
    display: flex;
    align-items: flex-start;
    gap: 10px;
    padding: 6px 7px 0 2px;
    background: #c4dbf8;
}

.message {
    flex: 1;
    height: 41px;
    display: flex;
    align-items: center;
    gap: 13px;
    padding: 0 0 2px 6px;
    border: 1px solid #9ebbe0;
    background: linear-gradient(#fff, #e2f1fd);
}

.message svg {
    width: 14px;
    height: 16px;
}

.message button {
    width: 79px;
    height: 22px;
    border: 1px solid #9ebbe0;
    background: #fff;
    line-height: 20px;
}

.bar-x {
    width: 10px;
    height: 10px;
    margin-top: 5px;
}

/* Formula bar */
.formula-bar {
    height: 19px;
    display: flex;
    margin-bottom: 4px;
    border: 1px solid #6f8fbc;
    border-width: 1px 0;
    background: #fff;
    color: #111;
    font: 15px "Liberation Serif", "Noto Sans CJK SC", serif;
}

.name-box {
    width: 158px;
    display: flex;
    align-items: center;
    padding-right: 4px;
}

.name-box input {
    flex: 1;
    min-width: 0;
    padding-right: 6px;
    text-align: center;
}

.name-box .caret {
    border-width: 5px 4px 0;
    border-top-color: #111;
}

.fx {
    width: 78px;
    display: flex;
    align-items: center;
    justify-content: space-between;
    padding: 0 6px 0 3px;
    border-right: 1px solid #8aa8d0;
    border-radius: 9px 0 0 9px;
    background: linear-gradient(#e8f0fb, #b8d0f0);
}

.fx i {
    width: 11px;
    height: 11px;
    border-radius: 50%;
    background: #d4dce8;
    box-shadow: inset 1px 1px 2px #8898b0;
}

.fx em {
    font-weight: bold;
    color: #555;
}

.formula {
    flex: 1;
    padding-left: 11px;
}

.expand {
    width: 17px;
    margin-right: 1px;
    border: 1px solid #8aa8d0;
    background: linear-gradient(#eaf2fd, #b4cbec);
}

.expand svg {
    display: block;
    width: 8px;
    height: 10px;
    margin: auto;
}

/* Sheet */
.sheet-area {
    flex: 1;
    min-height: 0;
    display: flex;
}

.sheet-clip {
    flex: 1;
    min-width: 0;
    overflow: hidden;
    background: #fff;
}

/* the last column runs on behind the scrollbar */
.sheet {
    width: calc(100% + 18px);
    table-layout: fixed;
    border-collapse: separate;
    border-spacing: 0;
    color: #c41818;
    font-size: 13px;
}

.c9 { width: 9px; }
.c31 { width: 31px; }
.c33 { width: 34px; }
.c39 { width: 39px; }
.c40 { width: 40px; }
.c50 { width: 50px; }
.c53 { width: 53px; }
.c69 { width: 69px; }
.c71 { width: 71px; }
.c72 { width: 72px; }
.c73 { width: 73px; }
.c82 { width: 82px; }
.c83 { width: 83px; }
.c84 { width: 84px; }
.c85 { width: 85px; }
.c124 { width: 124px; }
.c125 { width: 125px; }
.c166 { width: 166px; }

.sheet th, .sheet td {
    padding: 0;
    overflow: hidden;
    white-space: nowrap;
}

.sheet th {
    border-right: 1px solid #9eb6d4;
    border-bottom: 1px solid #9eb6d4;
    color: #2c3e50;
    font: 15px/17px "Liberation Serif", serif;
}

.sheet thead th {
    height: 19px;
    border-top: 1px solid #8aa8d0;
    background: linear-gradient(#f8fafd, #d4deec);
}

.sheet thead .corner {
    background: linear-gradient(135deg, #a9c4e9 60%, #d8e4f4 61%);
}

.sheet thead .sel {
    border-color: #e0a050;
    background: linear-gradient(#f9d08c, #f2be60);
}

.sheet tbody th {
    height: 40px;
    vertical-align: bottom;
    background: #e4ecf7;
}

.sheet tbody .sel {
    background: #ffd08c;
    border-color: #e8a850;
}

.sheet .edge {
    border-right: 1px solid #000;
}

.sheet .no {
    padding-bottom: 2px;
    border-right: 1px solid #000;
    border-bottom: 1px solid #000;
    color: #000;
    font-size: 14px;
    font-weight: bold;
    text-align: center;
}

.sheet .req {
    padding: 0 0 3px 3px;
    border-right: 1px solid #000;
    border-bottom: 1px solid #000;
}

.sheet .fig {
    padding-left: 3px;
    border-right: 1px solid #000;
    border-bottom: 1px solid #000;
    color: #111;
    font-size: 15px;
    line-height: 19px;
    vertical-align: top;
}

.fig a {
    text-decoration: underline;
}

.sheet code {
    font: 12px/14px "Liberation Mono", monospace;
    white-space: pre;
}

.sheet .fig code {
    font-size: 13px;
}

.plain-text {
    color: #111;
}

.sheet .active-cell {
    position: relative;
    z-index: 1;
    padding-left: 2px;
    border: 1px solid #000;
    box-shadow: 0 0 0 1px #fff, 0 0 0 2px #000;
}

.scrollbar {
    width: 16px;
    display: flex;
    flex-direction: column;
    padding-right: 1px;
    border-left: 1px solid #8aa8d0;
    background: #7c9cc8;
    position: relative;
}

.split-box {
    height: 8px;
    border: 1px solid #6f8fbc;
    background: #f4f8fd;
}

.track {
    height: 132px;
    text-align: center;
}

.track svg {
    width: 8px;
    height: 5px;
}

.thumb {
    flex: 1;
    display: flex;
    justify-content: center;
    padding-top: 134px;
    border: 1px solid #5f7fb0;
    border-radius: 2px 2px 0 0;
    background: linear-gradient(90deg, #f2f6fb, #c8d6ea);
}

.thumb svg {
    width: 8px;
    height: 9px;
}

/* Markup */
.highlight {
    position: absolute;
    left: 182px;
    top: 846px;
    width: 1328px;
    height: 60px;
    border: 4px solid #ff0;
    box-shadow: 3px 3px 4px rgba(0, 0, 0, 0.6), inset 3px 3px 4px rgba(0, 0, 0, 0.6);
}

.arrow {
    position: absolute;
    left: 1307px;
    top: 758px;
    width: 84px;
    height: 106px;
}

/* Input method bar */
.ime {
    position: absolute;
    right: 4px;
    bottom: 55px;
    height: 23px;
    display: flex;
    align-items: center;
    gap: 7px;
    padding-right: 5px;
    background: #fff;
    color: #3f4560;
    font-size: 15px;
    font-weight: bold;
}

.ime svg {
    width: 15px;
    height: 15px;
}

.ime .ime-logo {
    width: 27px;
    height: 27px;
}

/* Taskbar */
.taskbar {
    height: 40px;
    display: flex;
    align-items: center;
    background: #101010;
    color: #fff;
    font-size: 12px;
}

.start {
    width: 16px;
    height: 16px;
    margin: 0 23px 0 16px;
}

.start svg, .notice {
    display: block;
}

.tasks {
    flex: 1;
    height: 40px;
    display: flex;
    justify-content: space-between;
}

.task {
    width: 83px;
    display: flex;
    align-items: center;
    gap: 7px;
    padding-left: 4px;
    border-bottom: 2px solid #a8d8f4;
    white-space: nowrap;
}

.task svg {
    flex: none;
    width: 20px;
    height: 20px;
}

.task.current {
    width: 91px;
    margin: 0 -4px;
    padding-left: 8px;
    background: #363636;
}

.tray {
    display: flex;
    align-items: center;
    gap: 9px;
    margin-left: 10px;
}

.tray svg {
    width: 16px;
    height: 16px;
}

.lang {
    font-size: 14px;
}

.clock {
    width: 92px;
    text-align: center;
    line-height: 19px;
}

.notice {
    width: 18px;
    height: 18px;
    margin: 0 24px 0 2px;
}
```
